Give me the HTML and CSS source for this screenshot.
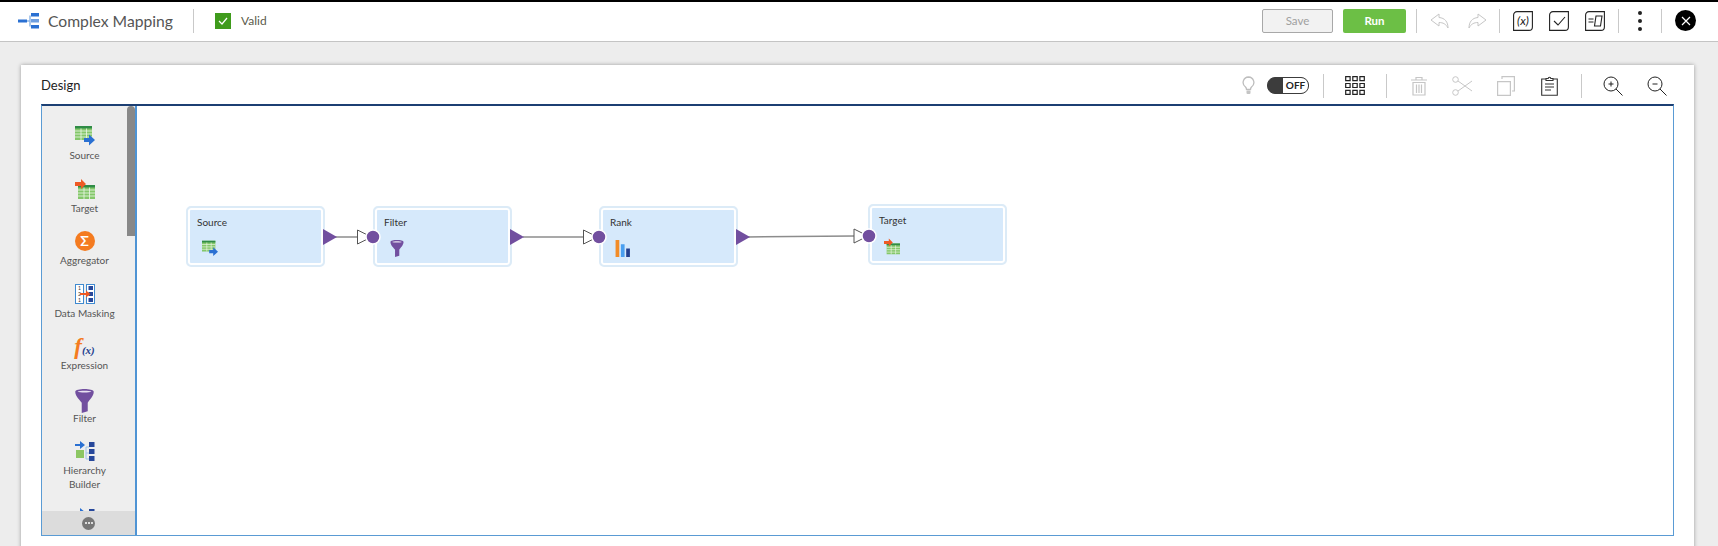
FILE: index.html
```html
<!DOCTYPE html>
<html lang="en">
<head>
  <meta charset="UTF-8" />
  <title>Complex Mapping</title>
  <link rel="stylesheet" href="styles.css">
</head>
<body>
  <svg class="defs" width="0" height="0">
    <symbol id="grid" viewBox="0 0 17 14">
      <rect width="17" height="14" fill="#84c76a"/>
      <rect width="17" height="2.500" fill="#2f8c46"/>
      <path d="M0 5h17M0 8h17M0 11h17M6 2.500v11.500M11.500 2.500v11.500" stroke="#eef7e8" stroke-width=".800" fill="none"/>
    </symbol>
    <symbol id="source" viewBox="0 0 20 20">
      <use href="#grid" x="0" y="0" width="17" height="14"/>
      <path d="M9 12h5V8.500l6 5.500-6 5.500V16H9z" fill="#2a70d2"/>
    </symbol>
    <symbol id="target" viewBox="0 0 20 20">
      <use href="#grid" x="3" y="6" width="17" height="14"/>
      <path d="M0 3h6V0l5 5-5 5V7H0z" fill="#ee5a24"/>
    </symbol>
    <symbol id="filter" viewBox="0 0 20 26">
      <path d="M0 3C0-1 20-1 20 3c0 5-5 9-6.500 12v9L7 26V15C5 12 0 8 0 3z" fill="#724f9f"/>
      <path d="M2.500 3c2-1.500 13-1.500 15 0-2 1.200-13 1.200-15 0z" fill="#e9e2f2"/>
    </symbol>
    <symbol id="rank" viewBox="0 0 14 16">
      <rect width="3.500" height="16" fill="#f28c28"/>
      <rect x="5" y="4" width="3.500" height="12" fill="#4a9ff0"/>
      <rect x="10" y="8" width="3.500" height="8" fill="#23408f"/>
    </symbol>
    <symbol id="hierarchy" viewBox="0 0 20 20">
      <path d="M11 6h3M11 6v12h3M11 12h3" stroke="#9cc3e8" fill="none"/>
      <rect x="14" y="1" width="5.500" height="5" fill="#27489b"/>
      <rect x="14" y="8" width="5.500" height="5" fill="#27489b"/>
      <rect x="14" y="15" width="5.500" height="5" fill="#27489b"/>
      <rect x="1" y="9" width="8" height="8" fill="#8cc663"/>
      <path d="M0 3h5V0l5 4-5 4V5H0z" fill="#2a70d2"/>
    </symbol>
  </svg>

  <header class="topbar">
    <svg class="logo" width="22" height="16" viewBox="0 0 22 16">
      <rect x="0" y="6.500" width="9" height="3" fill="#2a70d2"/>
      <path d="M9 8h3M12 2.500v11" stroke="#8fb6e6" stroke-width="1.500" fill="none"/>
      <rect x="13" y="0" width="8" height="3.500" fill="#2a70d2"/>
      <rect x="13" y="6" width="8" height="3.500" fill="#6f9fe0"/>
      <rect x="13" y="12" width="8" height="3.500" fill="#2a70d2"/>
    </svg>
    <span class="page-title">Complex Mapping</span>
    <span class="divider title-divider"></span>
    <span class="valid-box">
      <svg width="10" height="8" viewBox="0 0 10 8"><path d="M1 4l3 3 5-6" stroke="#fff" stroke-width="1.200" fill="none"/></svg>
    </span>
    <span class="valid-text">Valid</span>

    <div class="actions">
      <button class="btn btn-save">Save</button>
      <button class="btn btn-run">Run</button>
      <span class="divider"></span>
      <svg class="tool tool-undo" width="20" height="16" viewBox="0 0 20 16"><path d="M9 1L1 7l8 6V9.500c4 0 7 1.500 9 5.500 0-6-3-10-9-10.500z" fill="none" stroke="#c6c6c6"/></svg>
      <svg class="tool tool-redo" width="20" height="16" viewBox="0 0 20 16"><path d="M11 1l8 6-8 6V9.500c-4 0-7 1.500-9 5.500 0-6 3-10 9-10.500z" fill="none" stroke="#c6c6c6"/></svg>
      <span class="divider"></span>
      <svg class="tool tool-box" width="20" height="20" viewBox="0 0 20 20">
        <path d="M4 .600h15.400V16a3.400 3.400 0 0 1-3.400 3.400H.600V4A3.400 3.400 0 0 1 4 .600z" fill="none" stroke="#222" stroke-width="1.100"/>
        <text class="fx-label" x="10" y="14" text-anchor="middle">(x)</text>
      </svg>
      <svg class="tool tool-box" width="20" height="20" viewBox="0 0 20 20">
        <path d="M4 .600h15.400V16a3.400 3.400 0 0 1-3.400 3.400H.600V4A3.400 3.400 0 0 1 4 .600z" fill="none" stroke="#222" stroke-width="1.100"/>
        <path d="M5 10l4 4 7-8" fill="none" stroke="#222" stroke-width="1.100"/>
      </svg>
      <svg class="tool" width="20" height="20" viewBox="0 0 20 20">
        <path d="M4 .600h15.400V16a3.400 3.400 0 0 1-3.400 3.400H.600V4A3.400 3.400 0 0 1 4 .600z" fill="none" stroke="#222" stroke-width="1.100"/>
        <path d="M3.500 8h5M3.500 11h5M11 5h6l-1.500 10h-6z" fill="none" stroke="#222" stroke-width="1.100"/>
      </svg>
      <span class="divider divider-kebab"></span>
      <span class="kebab"><i></i><i></i><i></i></span>
      <span class="divider"></span>
      <span class="close">
        <svg width="10" height="10" viewBox="0 0 10 10"><path d="M1 1l8 8M9 1l-8 8" stroke="#fff" stroke-width="1.200"/></svg>
      </span>
    </div>
  </header>

  <main class="page">
    <section class="card">
      <div class="card-head">
        <h2 class="card-title">Design</h2>
        <div class="design-tools">
          <svg width="13" height="19" viewBox="0 0 13 19"><path d="M6.500 1a5.500 5.500 0 0 0-3 10c.7.700 1 1.500 1 2.500h4c0-1 .3-1.800 1-2.500a5.500 5.500 0 0 0-3-10z" fill="none" stroke="#bdbdbd" stroke-width="1.300"/><rect x="4.500" y="14.500" width="4" height="3.500" rx="1" fill="#c4c4c4"/></svg>
          <span class="toggle"><span class="toggle-off">OFF</span></span>
          <span class="divider divider-grid"></span>
          <svg class="t-grid" width="20" height="19" viewBox="0 0 20 19">
            <path d="M.700.700h4.400v4h-4.400zM7.800.700h4.400v4h-4.400zM14.900.700h4.400v4h-4.400zM.700 7.500h4.400v4h-4.400zM7.800 7.500h4.400v4h-4.400zM14.900 7.500h4.400v4h-4.400zM.700 14.300h4.400v4h-4.400zM7.800 14.300h4.400v4h-4.400zM14.900 14.300h4.400v4h-4.400z" fill="none" stroke="#222" stroke-width="1.200"/>
          </svg>
          <span class="divider divider-trash"></span>
          <svg class="t-trash" width="18" height="20" viewBox="0 0 18 20"><path d="M1 4h16M6 4V1.500h6V4M3 6.500h12V19H3zM6.500 8.500V17M9 8.500V17M11.500 8.500V17" fill="none" stroke="#c6c6c6" stroke-width="1.200"/></svg>
          <svg class="t-scissors" width="20" height="20" viewBox="0 0 20 20"><circle cx="3.500" cy="3.500" r="2.800" fill="none" stroke="#c6c6c6"/><circle cx="3.500" cy="16.500" r="2.800" fill="none" stroke="#c6c6c6"/><path d="M6 5l14 10M6 15L20 5" stroke="#c6c6c6" fill="none"/></svg>
          <svg class="t-copy" width="18" height="20" viewBox="0 0 18 20"><path d="M.600 5.600h12.800v13.800H.600zM5 3V.600h12.400V15H15" fill="none" stroke="#c6c6c6" stroke-width="1.200"/></svg>
          <svg class="t-clip" width="17" height="20" viewBox="0 0 17 20"><path d="M5 3H.700v16.300h15.600V3H12M5 4.500V2.500h2.200a1.300 1.300 0 0 1 2.600 0H12v2zM4 8h9M4 11h9M4 14h6" fill="none" stroke="#333" stroke-width="1.100"/></svg>
          <span class="divider divider-zoom"></span>
          <svg class="t-zoom" width="20" height="20" viewBox="0 0 20 20"><circle cx="8" cy="8" r="7" fill="none" stroke="#222"/><path d="M13 13l6.500 6.500M5.500 8h5M8 5.500v5" stroke="#222" fill="none"/></svg>
          <svg class="t-zoom-out" width="20" height="20" viewBox="0 0 20 20"><circle cx="8" cy="8" r="7" fill="none" stroke="#222"/><path d="M13 13l6.500 6.500M5.500 8h5" stroke="#222" fill="none"/></svg>
        </div>
      </div>

      <div class="canvas">
        <aside class="palette">
          <ul class="palette-list">
            <li class="palette-item">
              <svg class="palette-icon"><use href="#source"/></svg>
              <span>Source</span>
            </li>
            <li class="palette-item">
              <svg class="palette-icon"><use href="#target"/></svg>
              <span>Target</span>
            </li>
            <li class="palette-item">
              <span class="sigma">Σ</span>
              <span>Aggregator</span>
            </li>
            <li class="palette-item">
              <svg class="palette-icon" viewBox="0 0 20 20">
                <rect x=".500" y=".500" width="8" height="19" fill="#fff" stroke="#3f8ad0"/>
                <rect x="11.500" y=".500" width="8" height="19" fill="#fff" stroke="#3f8ad0"/>
                <text class="mask-digit" x="4.500" y="6">1</text>
                <text class="mask-digit" x="4.500" y="12">2</text>
                <text class="mask-digit" x="4.500" y="18">1</text>
                <rect x="13.500" y="2" width="4.500" height="4" fill="#27489b"/>
                <rect x="13.500" y="8" width="4.500" height="4" fill="#27489b"/>
                <rect x="13.500" y="14" width="4.500" height="4" fill="#27489b"/>
                <path d="M5 9h6V6.500l4.500 3.500-4.500 3.500V11H5z" fill="#ee5a24"/>
              </svg>
              <span>Data Masking</span>
            </li>
            <li class="palette-item">
              <span class="fx"><b>f</b><small>(x)</small></span>
              <span>Expression</span>
            </li>
            <li class="palette-item">
              <svg class="palette-icon palette-icon-filter"><use href="#filter"/></svg>
              <span>Filter</span>
            </li>
            <li class="palette-item">
              <svg class="palette-icon"><use href="#hierarchy"/></svg>
              <span>Hierarchy<br>Builder</span>
            </li>
            <li class="palette-item">
              <svg class="palette-icon"><use href="#hierarchy"/></svg>
            </li>
          </ul>
          <div class="scroll-thumb"></div>
          <div class="palette-foot">
            <span class="more"><i></i><i></i><i></i></span>
          </div>
        </aside>

        <div class="graph">
          <svg class="links" width="1536" height="430" viewBox="138 105 1536 430">
            <g fill="none" stroke="#8c8c8c" stroke-width="1.500">
              <path d="M336 236h23"/>
              <path d="M524 236h61"/>
              <path d="M748 236L855 235"/>
            </g>
            <g fill="#fff" stroke="#555">
              <path d="M358.500 229l14 7-14 7z"/>
              <path d="M584.500 229l14 7-14 7z"/>
              <path d="M855 228l14 7-14 7z"/>
            </g>
            <g fill="#724f9f">
              <path d="M324 228l14 8-14 8z"/>
              <path d="M511 228l14 8-14 8z"/>
              <path d="M737 228l14 8-14 8z"/>
            </g>
            <g fill="#724f9f" stroke="#fff" stroke-width="1.500">
              <circle cx="374" cy="236" r="7"/>
              <circle cx="600" cy="236" r="7"/>
              <circle cx="870" cy="235" r="7"/>
            </g>
          </svg>

          <div class="node node-source">
            <span class="node-name">Source</span>
            <svg class="node-icon"><use href="#source"/></svg>
          </div>
          <div class="node node-filter">
            <span class="node-name">Filter</span>
            <svg class="node-icon"><use href="#filter"/></svg>
          </div>
          <div class="node node-rank">
            <span class="node-name">Rank</span>
            <svg class="node-icon"><use href="#rank"/></svg>
          </div>
          <div class="node node-target">
            <span class="node-name">Target</span>
            <svg class="node-icon"><use href="#target"/></svg>
          </div>
        </div>
      </div>
    </section>
  </main>
</body>
</html>
```

FILE: styles.css
```css
* {
  box-sizing: border-box;
}
html, body {
  height: 100%;
}
body {
  margin: 0;
  overflow: hidden;
  background-color: #ededed;
  font-family: Lato, "Open Sans", Arial, sans-serif;
  color: #333;
}
.defs {
  position: absolute;
}
svg {
  display: block;
  flex: none;
}

/* top bar */
.topbar {
  display: flex;
  align-items: center;
  height: 42px;
  padding: 0 22px 2px 18px;
  background-color: #fff;
  border-top: 2px solid #000;
  border-bottom: 1px solid #c4c4c4;
}
.page-title {
  margin-left: 8px;
  font-size: 15.700px;
  color: #555;
}
.divider {
  flex: none;
  width: 1px;
  height: 24px;
  background-color: #c9c9c9;
}
.title-divider {
  margin: 0 21px 0 20px;
}
.valid-box {
  display: flex;
  align-items: center;
  justify-content: center;
  width: 16px;
  height: 16px;
  background-color: #3f9b1c;
}
.valid-text {
  margin-left: 10px;
  font-size: 12px;
  color: #5a5a4a;
}
.actions {
  display: flex;
  align-items: center;
  margin-left: auto;
}
.btn {
  height: 24px;
  padding: 0;
  font-family: inherit;
  font-size: 11.500px;
}
.btn-save {
  width: 71px;
  background-color: #f2f2f2;
  border: 1px solid #a8a8a8;
  border-radius: 2px;
  color: #a0a0a0;
}
.btn-run {
  width: 63px;
  margin: 0 10px;
  background-color: #6cbf45;
  border: 0;
  border-radius: 2px;
  color: #fff;
  font-weight: 700;
}
.tool-undo {
  margin: 0 17px 0 13px;
}
.tool-redo {
  margin-right: 12px;
}
.actions .divider + .tool-box {
  margin-left: 13px;
}
.tool-box {
  margin-right: 16px;
}
.fx-label {
  font-family: Lato, sans-serif;
  font-style: italic;
  font-size: 12px;
  fill: #222;
}
.divider-kebab {
  margin-left: 13px;
}
.kebab {
  display: flex;
  flex-direction: column;
  align-items: center;
  gap: 4px;
  width: 42px;
}
.kebab i {
  width: 4px;
  height: 4px;
  border-radius: 50%;
  background-color: #222;
}
.close {
  display: flex;
  align-items: center;
  justify-content: center;
  width: 21px;
  height: 21px;
  margin-left: 13px;
  border-radius: 50%;
  background-color: #000;
}

/* design card */
.page {
  padding: 23px 24px 0 21px;
}
.card {
  height: 490px;
  padding: 0 20px 0 20px;
  background-color: #fff;
  box-shadow: 0 0 4px rgba(0, 0, 0, 0.35);
}
.card-head {
  display: flex;
  align-items: center;
  justify-content: space-between;
  height: 39px;
}
.card-title {
  margin: 0;
  font-size: 13px;
  font-weight: 400;
  color: #222;
}
.design-tools {
  display: flex;
  align-items: center;
  margin: 2px 7px 0 0;
}
.toggle {
  display: flex;
  justify-content: flex-end;
  width: 42px;
  height: 17px;
  margin-left: 12px;
  background-color: #3c3c3c;
  border: 1px solid #3c3c3c;
  border-radius: 8px;
}
.toggle-off {
  width: 25px;
  background-color: #fff;
  border-radius: 0 7px 7px 0;
  font-size: 10px;
  font-weight: 700;
  line-height: 15px;
  text-align: center;
  color: #222;
}
.divider-grid {
  margin-left: 14px;
}
.t-grid {
  margin: 0 21px;
}
.t-trash {
  margin-left: 23px;
}
.t-scissors {
  margin-left: 24px;
}
.t-copy {
  margin-left: 25px;
}
.t-clip {
  margin-left: 26px;
}
.divider-zoom {
  margin-left: 23px;
}
.t-zoom {
  margin-left: 21px;
}
.t-zoom-out {
  margin-left: 24px;
}

/* canvas */
.canvas {
  display: flex;
  width: 1633px;
  height: 432px;
  border: 1px solid #5a9bd4;
  border-top: 2px solid #1c3f73;
}
.palette {
  position: relative;
  display: flex;
  flex-direction: column;
  flex: none;
  width: 95px;
  background-color: #eee;
  border-right: 2px solid #4f94d4;
}
.palette-list {
  flex: 1;
  min-height: 0;
  margin: 0;
  padding: 20px 8px 0 0;
  overflow: hidden;
  list-style: none;
}
.palette-item {
  display: flex;
  flex-direction: column;
  align-items: center;
  margin-bottom: 16.500px;
  font-size: 10px;
  line-height: 14px;
  text-align: center;
  color: #555;
}
.palette-icon {
  width: 20px;
  height: 20px;
  margin-bottom: 2px;
}
.palette-icon-filter {
  width: 19px;
  height: 24px;
  margin-bottom: -2px;
}
.mask-digit {
  font-size: 5px;
  text-anchor: middle;
  fill: #333;
}
.sigma {
  width: 20px;
  height: 20px;
  margin-bottom: 2px;
  border-radius: 50%;
  background-color: #f47b20;
  font-size: 14px;
  font-weight: 700;
  line-height: 20px;
  color: #fff;
}
.fx {
  height: 22px;
  font-family: "Liberation Serif", serif;
  font-style: italic;
  line-height: 22px;
}
.fx b {
  font-size: 23px;
  color: #f47b20;
}
.fx small {
  font-size: 11px;
  font-weight: 700;
  color: #23408f;
}
.scroll-thumb {
  position: absolute;
  top: 0;
  right: 0;
  width: 8px;
  height: 130px;
  background-color: #888;
  border-radius: 4px 4px 0 0;
}
.palette-foot {
  display: flex;
  align-items: center;
  justify-content: center;
  flex: none;
  height: 24px;
  background-color: #dcdcdc;
}
.more {
  display: flex;
  align-items: center;
  justify-content: center;
  gap: 1px;
  width: 13px;
  height: 13px;
  border-radius: 50%;
  background-color: #777;
}
.more i {
  width: 2px;
  height: 2px;
  border-radius: 50%;
  background-color: #fff;
}

/* mapping diagram */
.graph {
  position: relative;
  flex: 1;
  min-width: 0;
}
.links {
  position: absolute;
  top: 0;
  left: 0;
  z-index: 1;
}
.node {
  position: absolute;
  display: flex;
  flex-direction: column;
  align-items: flex-start;
  width: 139px;
  height: 61px;
  padding: 7px 9px;
  background-color: #d6e9fb;
  border: 2px solid #dcebf7;
  border-radius: 5px;
  box-shadow: inset 0 0 0 2px #fff;
  font-size: 10px;
  line-height: 14px;
  color: #333;
}
.node-icon {
  width: 16px;
  height: 17px;
  margin: 11px 0 0 5px;
}
.node-source {
  left: 49px;
  top: 100px;
}
.node-filter {
  left: 236px;
  top: 100px;
}
.node-rank {
  left: 462px;
  top: 100px;
}
.node-target {
  left: 731px;
  top: 98px;
}
```
